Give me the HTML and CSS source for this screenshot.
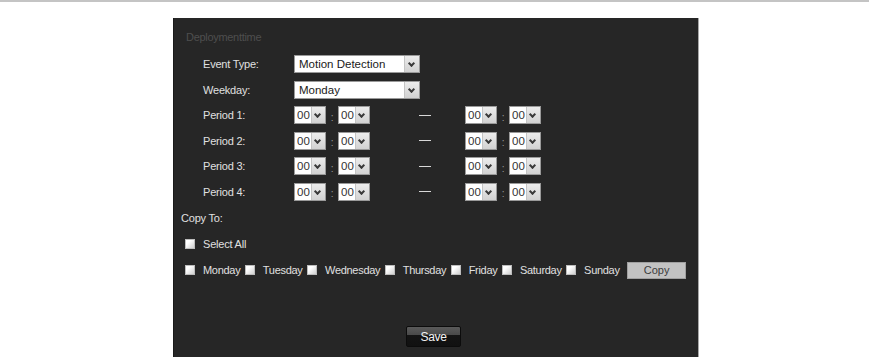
FILE: index.html
```html
<!DOCTYPE html>
<html lang="en">
<head>
  <meta charset="UTF-8" />
  <title>Deployment time</title>
  <link rel="stylesheet" href="styles.css">
</head>
<body>
  <div class="topline"></div>

  <div class="panel">
    <div class="title">Deploymenttime</div>

    <div class="rows">
      <div class="row">
        <span class="label">Event Type:</span>
        <span class="sel wide"><select><option>Motion Detection</option></select></span>
      </div>
      <div class="row">
        <span class="label">Weekday:</span>
        <span class="sel wide"><select><option>Monday</option></select></span>
      </div>
      <div class="row">
        <span class="label">Period 1:</span>
        <span class="sel small"><select><option>00</option></select></span>
        <span class="colon">:</span>
        <span class="sel small"><select><option>00</option></select></span>
        <span class="dash"></span>
        <span class="sel small end"><select><option>00</option></select></span>
        <span class="colon">:</span>
        <span class="sel small"><select><option>00</option></select></span>
      </div>
      <div class="row">
        <span class="label">Period 2:</span>
        <span class="sel small"><select><option>00</option></select></span>
        <span class="colon">:</span>
        <span class="sel small"><select><option>00</option></select></span>
        <span class="dash"></span>
        <span class="sel small end"><select><option>00</option></select></span>
        <span class="colon">:</span>
        <span class="sel small"><select><option>00</option></select></span>
      </div>
      <div class="row">
        <span class="label">Period 3:</span>
        <span class="sel small"><select><option>00</option></select></span>
        <span class="colon">:</span>
        <span class="sel small"><select><option>00</option></select></span>
        <span class="dash"></span>
        <span class="sel small end"><select><option>00</option></select></span>
        <span class="colon">:</span>
        <span class="sel small"><select><option>00</option></select></span>
      </div>
      <div class="row">
        <span class="label">Period 4:</span>
        <span class="sel small"><select><option>00</option></select></span>
        <span class="colon">:</span>
        <span class="sel small"><select><option>00</option></select></span>
        <span class="dash"></span>
        <span class="sel small end"><select><option>00</option></select></span>
        <span class="colon">:</span>
        <span class="sel small"><select><option>00</option></select></span>
      </div>
    </div>

    <div class="copy-to">Copy To:</div>

    <div class="select-all">
      <span class="cb"></span><span>Select All</span>
    </div>

    <div class="days">
      <span class="cb"></span><span class="day">Monday</span>
      <span class="cb"></span><span class="day">Tuesday</span>
      <span class="cb"></span><span class="day">Wednesday</span>
      <span class="cb"></span><span class="day">Thursday</span>
      <span class="cb"></span><span class="day">Friday</span>
      <span class="cb"></span><span class="day">Saturday</span>
      <span class="cb"></span><span class="day">Sunday</span>
      <button class="copy-btn">Copy</button>
    </div>

    <div class="save-wrap">
      <button class="save-btn">Save</button>
    </div>
  </div>
</body>
</html>
```

FILE: styles.css
```css
body {
  margin: 0;
  background: #fff;
  font-family: "Liberation Sans", Arial, sans-serif;
  font-size: 11px;
  color: #e0e0e0;
}
.topline {
  height: 2px;
  background: #c4c4c4;
}
.panel {
  margin: 16px 0 0 173px;
  width: 526px;
  height: 339px;
  box-sizing: border-box;
  background: #262626;
  border-left: 1px solid #1a1a1a;
  border-right: 1px solid #a8a8a8;
  padding: 12px 0 0 7px;
}
.title {
  line-height: 14px;
  color: #4e4e4e;
  padding-left: 5px;
  letter-spacing: -0.3px;
}
.rows {
  margin: 11px 0 0 22px;
  display: flex;
  flex-direction: column;
  gap: 7.5px;
}
.row {
  display: flex;
  align-items: center;
  height: 18px;
  letter-spacing: -0.2px;
}
.label {
  width: 91px;
  flex-shrink: 0;
}
.sel {
  position: relative;
  display: inline-block;
  height: 18px;
  box-sizing: border-box;
  border: 1px solid #9a9a9a;
  background: #fff;
}
.sel select {
  appearance: none;
  -webkit-appearance: none;
  border: none;
  background: transparent;
  height: 16px;
  width: 100%;
  padding: 0 0 0 4px;
  margin: 0;
  font-family: "Liberation Sans", Arial, sans-serif;
  font-size: 11.5px;
  color: #1a1a1a;
  outline: none;
}
.sel::after {
  content: "";
  position: absolute;
  top: 0;
  right: 0;
  width: 13px;
  height: 16px;
  background: linear-gradient(#ececec, #d2d2d2);
  border-left: 1px solid #c4c4c4;
}
.sel::before {
  content: "";
  position: absolute;
  z-index: 1;
  right: 5px;
  top: 5px;
  width: 3px;
  height: 3px;
  border-right: 2px solid #3a3a3a;
  border-bottom: 2px solid #3a3a3a;
  transform: rotate(45deg);
}
.wide {
  width: 126px;
}
.wide::after {
  width: 14px;
}
.small {
  width: 32px;
}
.small select {
  padding-left: 2px;
  color: #333;
}
.colon {
  width: 12px;
  text-align: center;
  color: #9a9a9a;
  font-size: 10px;
  padding-top: 4px;
}
.dash {
  width: 12px;
  height: 1px;
  background: #d8d8d8;
  margin-left: 49px;
}
.sel.end {
  margin-left: 34px;
}
.copy-to {
  margin-top: 10.5px;
  line-height: 14px;
  letter-spacing: -0.2px;
}
.select-all {
  margin: 12px 0 0 4px;
  display: flex;
  align-items: center;
  height: 14px;
  letter-spacing: -0.2px;
}
.cb {
  display: inline-block;
  width: 10px;
  height: 10px;
  box-sizing: border-box;
  background: linear-gradient(135deg, #ffffff 30%, #cfcfcf);
  border: 1px solid #bdbdbd;
  margin-right: 8px;
}
.days {
  margin: 10.5px 0 0 4px;
  display: flex;
  align-items: center;
  height: 17px;
  letter-spacing: -0.3px;
}
.day {
  margin-right: 4.5px;
}
.copy-btn {
  margin-left: 3px;
  width: 59px;
  height: 17px;
  border: 1px solid #a0a0a0;
  background: #c2c2c2;
  color: #3c3c3c;
  font-family: "Liberation Sans", Arial, sans-serif;
  font-size: 11px;
  padding: 0;
}
.save-wrap {
  margin-top: 47.5px;
  padding-left: 225px;
}
.save-btn {
  width: 55px;
  height: 21px;
  border: 1px solid #0c0c0c;
  border-radius: 2px;
  background: linear-gradient(#5a5a5a 0, #4a4a4a 40%, #141414 41%, #111 100%);
  color: #f2f2f2;
  font-family: "Liberation Sans", Arial, sans-serif;
  font-size: 12px;
  padding: 0;
  letter-spacing: -0.3px;
}
```
